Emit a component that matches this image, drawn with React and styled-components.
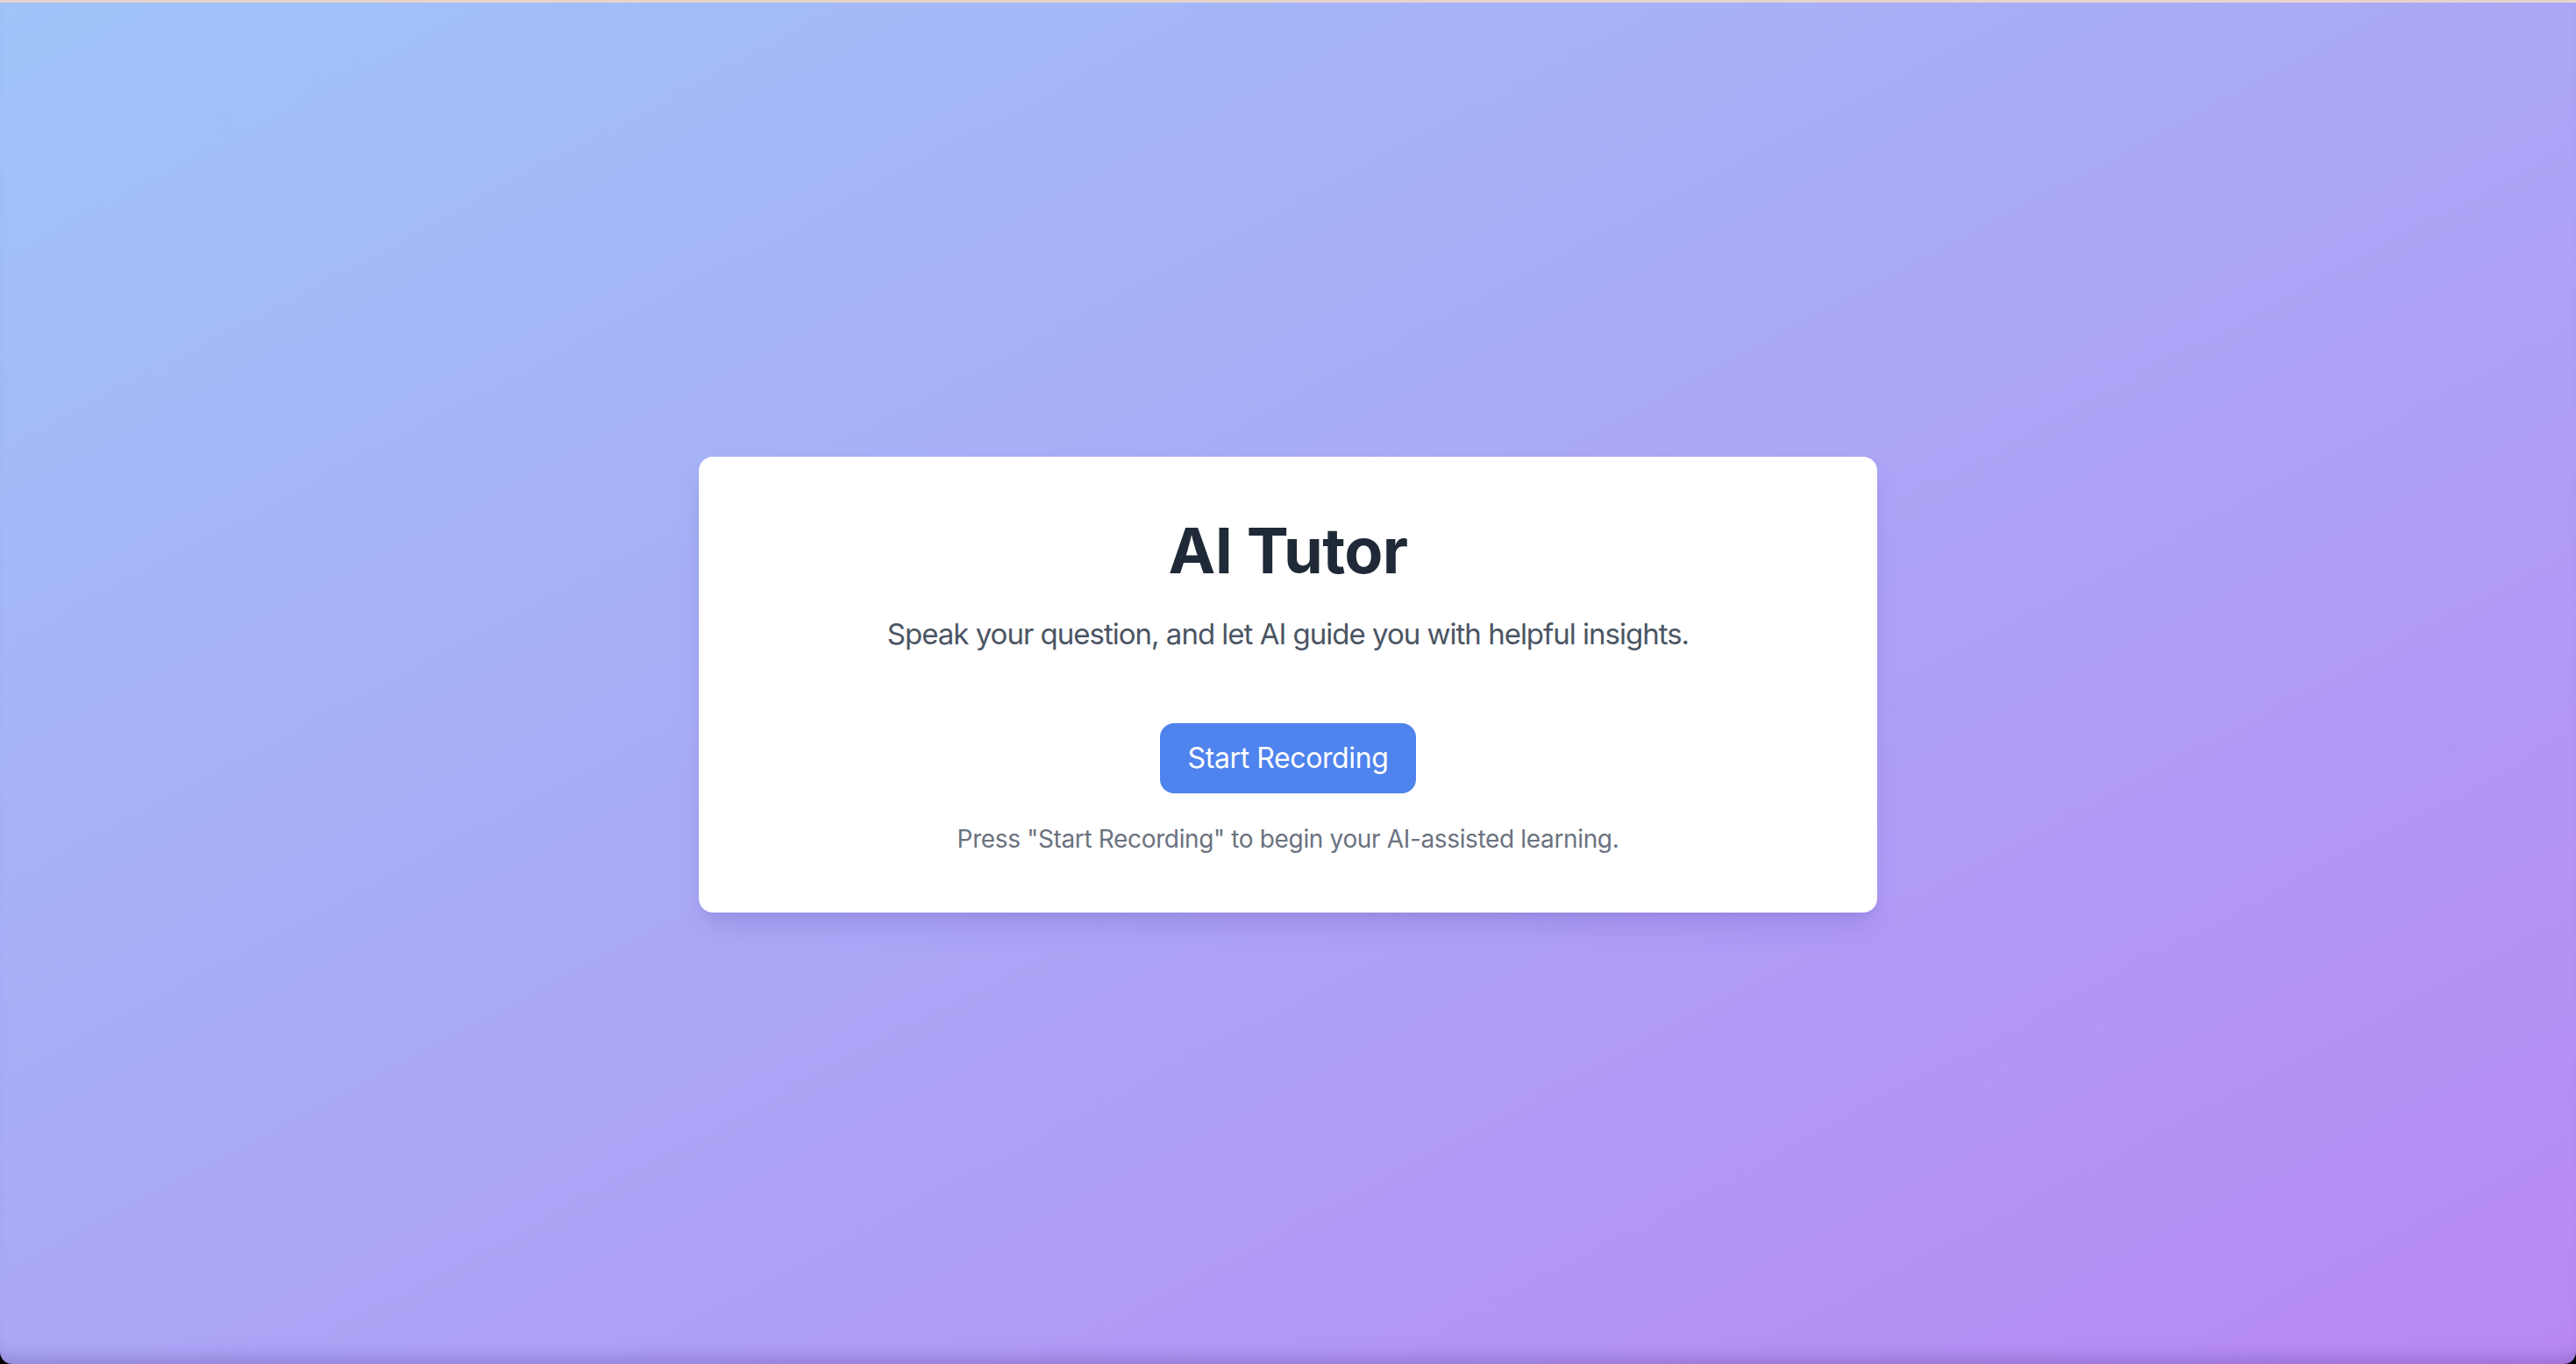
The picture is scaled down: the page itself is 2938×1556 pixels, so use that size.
import React from "react";
import styled, { createGlobalStyle } from "styled-components";

const GlobalStyle = createGlobalStyle`
  html, body {
    margin: 0;
    padding: 0;
    background: #000;
  }
  body {
    font-family: Inter, "Noto Sans", sans-serif;
    -webkit-font-smoothing: antialiased;
  }
  * { box-sizing: border-box; }
`;

const Page = styled.div`
  min-height: 100vh;
  display: flex;
  align-items: center;
  justify-content: center;
  background: linear-gradient(to bottom right, #9fc4f8 0%, #aba7f6 50%, #b888f3 100%);
  border-top: 3px solid #e6d3cb;
  border-bottom-left-radius: 14px;
  border-bottom-right-radius: 14px;
  box-shadow: inset 0 -22px 18px -14px rgba(60, 30, 120, 0.22);
  padding-top: 3px;
`;

const Card = styled.div`
  width: 1344px;
  background: #ffffff;
  border-radius: 16px;
  padding: 64px;
  box-shadow: 0 20px 30px -6px rgba(80, 60, 160, 0.18), 0 8px 12px -8px rgba(80, 60, 160, 0.14);
  display: flex;
  flex-direction: column;
  align-items: center;
  text-align: center;
`;

const Title = styled.h1`
  margin: 3px 0 25px;
  font-size: 72px;
  line-height: 80px;
  font-weight: 700;
  color: #1f2937;
  letter-spacing: -0.6px;
`;

const Subtitle = styled.p`
  margin: 2px 0 74px;
  font-size: 33px;
  line-height: 56px;
  letter-spacing: -1px;
  color: #4b5563;
`;

const RecordButton = styled.button`
  font-family: inherit;
  font-size: 32px;
  line-height: 48px;
  letter-spacing: -0.4px;
  padding: 16px 32px;
  border: none;
  border-radius: 16px;
  background: #4f83ed;
  color: #ffffff;
  cursor: pointer;
`;

const Hint = styled.p`
  margin: 32px 0 0;
  font-size: 28px;
  line-height: 40px;
  letter-spacing: -0.35px;
  color: #6b7280;
`;

export default function App() {
  return (
    <>
      <GlobalStyle />
      <Page>
        <Card>
          <Title>AI Tutor</Title>
          <Subtitle>Speak your question, and let AI guide you with helpful insights.</Subtitle>
          <RecordButton>Start Recording</RecordButton>
          <Hint>Press "Start Recording" to begin your AI-assisted learning.</Hint>
        </Card>
      </Page>
    </>
  );
}
